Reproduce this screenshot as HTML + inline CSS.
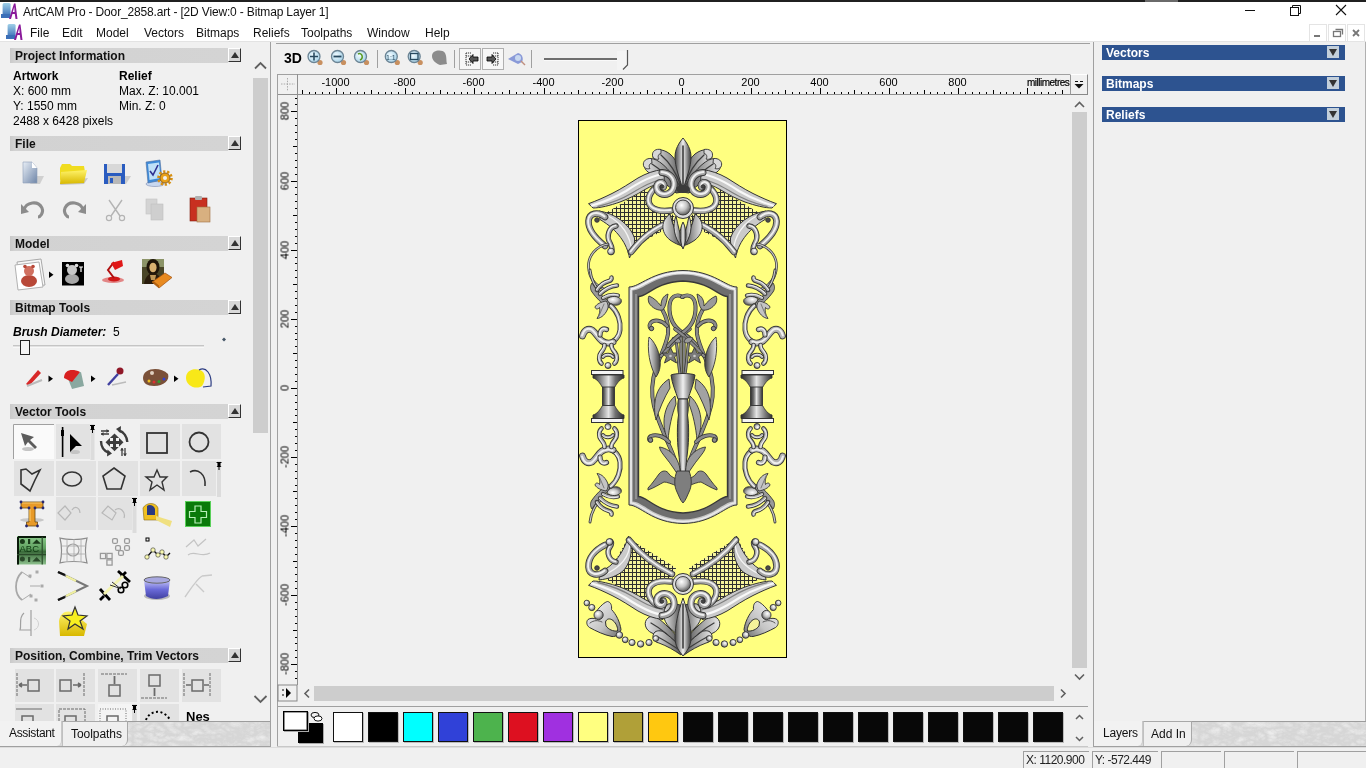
<!DOCTYPE html><html><head><meta charset="utf-8"><style>
*{margin:0;padding:0;box-sizing:border-box}
html,body{width:1366px;height:768px;overflow:hidden;background:#f0f0f0;font-family:"Liberation Sans",sans-serif;color:#000;position:relative}
.a{position:absolute}
.t{position:absolute;white-space:nowrap;line-height:1;will-change:transform}
.hdr{position:absolute;left:10px;width:218px;height:15px;background:linear-gradient(90deg,#c9c9c9 0,#d2d2d2 5px,#d4d4d4 100%)}
.hdrt{position:absolute;left:5px;top:1px;font-weight:bold;font-size:12px;color:#111;will-change:transform}
.cbtn{position:absolute;left:228px;width:13px;height:14px;background:#d8d8d8;border-top:1px solid #fff;border-left:1px solid #fff;border-right:1px solid #333;border-bottom:1px solid #333}
.cbtn:after{content:"";position:absolute;left:2px;top:3px;border-left:4px solid transparent;border-right:4px solid transparent;border-bottom:6px solid #333}
.sw{position:absolute;top:712px;width:30px;height:30px;border:1px solid #111;box-shadow:1px 1px 0 #bbb}
.bar{position:absolute;left:1102px;width:243px;height:15px;background:#2d5390}
.bart{position:absolute;left:4px;top:1px;font-weight:bold;font-size:12px;color:#fff;will-change:transform}
.ddb{position:absolute;left:225px;top:1px;width:12px;height:12px;background:#c3cfda}
.ddb:after{content:"";position:absolute;left:2px;top:3px;border-left:4px solid transparent;border-right:4px solid transparent;border-top:7px solid #333}
</style></head><body>
<div class="a" style="left:0;top:0;width:1366px;height:2px;background:#202020"></div>
<div class="a" style="left:0;top:2px;width:1366px;height:39px;background:#fff"></div>
<div class="a" style="left:0;top:41px;width:1366px;height:1px;background:#e3e3e3"></div>
<div class="t" style="left:23px;top:6px;font-size:12px;color:#111;letter-spacing:-0.16px">ArtCAM Pro - Door_2858.art - [2D View:0 - Bitmap Layer 1]</div>
<div class="t" style="left:30px;top:27px;font-size:12px;color:#111">File</div>
<div class="t" style="left:62px;top:27px;font-size:12px;color:#111">Edit</div>
<div class="t" style="left:96px;top:27px;font-size:12px;color:#111">Model</div>
<div class="t" style="left:144px;top:27px;font-size:12px;color:#111">Vectors</div>
<div class="t" style="left:196px;top:27px;font-size:12px;color:#111">Bitmaps</div>
<div class="t" style="left:253px;top:27px;font-size:12px;color:#111">Reliefs</div>
<div class="t" style="left:301px;top:27px;font-size:12px;color:#111">Toolpaths</div>
<div class="t" style="left:367px;top:27px;font-size:12px;color:#111">Window</div>
<div class="t" style="left:425px;top:27px;font-size:12px;color:#111">Help</div>
<div class="a" style="left:270px;top:42px;width:1px;height:705px;background:#a0a0a0"></div>
<div class="hdr" style="top:48px"><div class="hdrt">Project Information</div></div><div class="cbtn" style="top:48px"></div>
<div class="hdr" style="top:136px"><div class="hdrt">File</div></div><div class="cbtn" style="top:136px"></div>
<div class="hdr" style="top:236px"><div class="hdrt">Model</div></div><div class="cbtn" style="top:236px"></div>
<div class="hdr" style="top:300px"><div class="hdrt">Bitmap Tools</div></div><div class="cbtn" style="top:300px"></div>
<div class="hdr" style="top:404px"><div class="hdrt">Vector Tools</div></div><div class="cbtn" style="top:404px"></div>
<div class="hdr" style="top:648px"><div class="hdrt">Position, Combine, Trim Vectors</div></div><div class="cbtn" style="top:648px"></div>
<div class="t" style="left:13px;top:70px;font-size:12px;font-weight:bold">Artwork</div>
<div class="t" style="left:119px;top:70px;font-size:12px;font-weight:bold">Relief</div>
<div class="t" style="left:13px;top:85px;font-size:12px">X: 600 mm</div>
<div class="t" style="left:13px;top:100px;font-size:12px">Y: 1550 mm</div>
<div class="t" style="left:13px;top:115px;font-size:12px">2488 x 6428 pixels</div>
<div class="t" style="left:119px;top:85px;font-size:12px">Max. Z: 10.001</div>
<div class="t" style="left:119px;top:100px;font-size:12px">Min. Z: 0</div>
<div class="t" style="left:13px;top:326px;font-size:12px;font-weight:bold;font-style:italic">Brush Diameter:</div><div class="t" style="left:113px;top:326px;font-size:12px">5</div>
<div class="a" style="left:253px;top:78px;width:15px;height:355px;background:#cdcdcd"></div>
<div class="a" style="left:276px;top:43px;width:814px;height:1px;background:#a0a0a0"></div>
<div class="t" style="left:284px;top:51px;font-size:14px;font-weight:bold">3D</div>
<div class="a" style="left:277px;top:74px;width:811px;height:1px;background:#a0a0a0"></div>
<div class="a" style="left:277px;top:94px;width:793px;height:1px;background:#909090"></div>
<div class="a" style="left:277px;top:74px;width:1px;height:628px;background:#a0a0a0"></div>
<div class="a" style="left:297px;top:74px;width:1px;height:611px;background:#909090"></div>
<div class="a" style="left:302px;top:90px;width:1px;height:4px;background:#000"></div><div class="a" style="left:309px;top:92px;width:1px;height:2px;background:#000"></div><div class="a" style="left:315px;top:92px;width:1px;height:2px;background:#000"></div><div class="a" style="left:322px;top:92px;width:1px;height:2px;background:#000"></div><div class="a" style="left:329px;top:92px;width:1px;height:2px;background:#000"></div><div class="a" style="left:336px;top:88px;width:1px;height:6px;background:#000"></div><div class="t" style="left:305px;top:77px;width:61px;text-align:center;font-size:11px">-1000</div><div class="a" style="left:343px;top:92px;width:1px;height:2px;background:#000"></div><div class="a" style="left:350px;top:92px;width:1px;height:2px;background:#000"></div><div class="a" style="left:357px;top:92px;width:1px;height:2px;background:#000"></div><div class="a" style="left:364px;top:92px;width:1px;height:2px;background:#000"></div><div class="a" style="left:371px;top:90px;width:1px;height:4px;background:#000"></div><div class="a" style="left:378px;top:92px;width:1px;height:2px;background:#000"></div><div class="a" style="left:385px;top:92px;width:1px;height:2px;background:#000"></div><div class="a" style="left:391px;top:92px;width:1px;height:2px;background:#000"></div><div class="a" style="left:398px;top:92px;width:1px;height:2px;background:#000"></div><div class="a" style="left:405px;top:88px;width:1px;height:6px;background:#000"></div><div class="t" style="left:374px;top:77px;width:61px;text-align:center;font-size:11px">-800</div><div class="a" style="left:412px;top:92px;width:1px;height:2px;background:#000"></div><div class="a" style="left:419px;top:92px;width:1px;height:2px;background:#000"></div><div class="a" style="left:426px;top:92px;width:1px;height:2px;background:#000"></div><div class="a" style="left:433px;top:92px;width:1px;height:2px;background:#000"></div><div class="a" style="left:440px;top:90px;width:1px;height:4px;background:#000"></div><div class="a" style="left:447px;top:92px;width:1px;height:2px;background:#000"></div><div class="a" style="left:454px;top:92px;width:1px;height:2px;background:#000"></div><div class="a" style="left:461px;top:92px;width:1px;height:2px;background:#000"></div><div class="a" style="left:467px;top:92px;width:1px;height:2px;background:#000"></div><div class="a" style="left:474px;top:88px;width:1px;height:6px;background:#000"></div><div class="t" style="left:443px;top:77px;width:61px;text-align:center;font-size:11px">-600</div><div class="a" style="left:481px;top:92px;width:1px;height:2px;background:#000"></div><div class="a" style="left:488px;top:92px;width:1px;height:2px;background:#000"></div><div class="a" style="left:495px;top:92px;width:1px;height:2px;background:#000"></div><div class="a" style="left:502px;top:92px;width:1px;height:2px;background:#000"></div><div class="a" style="left:509px;top:90px;width:1px;height:4px;background:#000"></div><div class="a" style="left:516px;top:92px;width:1px;height:2px;background:#000"></div><div class="a" style="left:523px;top:92px;width:1px;height:2px;background:#000"></div><div class="a" style="left:530px;top:92px;width:1px;height:2px;background:#000"></div><div class="a" style="left:537px;top:92px;width:1px;height:2px;background:#000"></div><div class="a" style="left:544px;top:88px;width:1px;height:6px;background:#000"></div><div class="t" style="left:513px;top:77px;width:61px;text-align:center;font-size:11px">-400</div><div class="a" style="left:550px;top:92px;width:1px;height:2px;background:#000"></div><div class="a" style="left:557px;top:92px;width:1px;height:2px;background:#000"></div><div class="a" style="left:564px;top:92px;width:1px;height:2px;background:#000"></div><div class="a" style="left:571px;top:92px;width:1px;height:2px;background:#000"></div><div class="a" style="left:578px;top:90px;width:1px;height:4px;background:#000"></div><div class="a" style="left:585px;top:92px;width:1px;height:2px;background:#000"></div><div class="a" style="left:592px;top:92px;width:1px;height:2px;background:#000"></div><div class="a" style="left:599px;top:92px;width:1px;height:2px;background:#000"></div><div class="a" style="left:606px;top:92px;width:1px;height:2px;background:#000"></div><div class="a" style="left:613px;top:88px;width:1px;height:6px;background:#000"></div><div class="t" style="left:582px;top:77px;width:61px;text-align:center;font-size:11px">-200</div><div class="a" style="left:620px;top:92px;width:1px;height:2px;background:#000"></div><div class="a" style="left:626px;top:92px;width:1px;height:2px;background:#000"></div><div class="a" style="left:633px;top:92px;width:1px;height:2px;background:#000"></div><div class="a" style="left:640px;top:92px;width:1px;height:2px;background:#000"></div><div class="a" style="left:647px;top:90px;width:1px;height:4px;background:#000"></div><div class="a" style="left:654px;top:92px;width:1px;height:2px;background:#000"></div><div class="a" style="left:661px;top:92px;width:1px;height:2px;background:#000"></div><div class="a" style="left:668px;top:92px;width:1px;height:2px;background:#000"></div><div class="a" style="left:675px;top:92px;width:1px;height:2px;background:#000"></div><div class="a" style="left:682px;top:88px;width:1px;height:6px;background:#000"></div><div class="t" style="left:651px;top:77px;width:61px;text-align:center;font-size:11px">0</div><div class="a" style="left:689px;top:92px;width:1px;height:2px;background:#000"></div><div class="a" style="left:696px;top:92px;width:1px;height:2px;background:#000"></div><div class="a" style="left:702px;top:92px;width:1px;height:2px;background:#000"></div><div class="a" style="left:709px;top:92px;width:1px;height:2px;background:#000"></div><div class="a" style="left:716px;top:90px;width:1px;height:4px;background:#000"></div><div class="a" style="left:723px;top:92px;width:1px;height:2px;background:#000"></div><div class="a" style="left:730px;top:92px;width:1px;height:2px;background:#000"></div><div class="a" style="left:737px;top:92px;width:1px;height:2px;background:#000"></div><div class="a" style="left:744px;top:92px;width:1px;height:2px;background:#000"></div><div class="a" style="left:751px;top:88px;width:1px;height:6px;background:#000"></div><div class="t" style="left:720px;top:77px;width:61px;text-align:center;font-size:11px">200</div><div class="a" style="left:758px;top:92px;width:1px;height:2px;background:#000"></div><div class="a" style="left:765px;top:92px;width:1px;height:2px;background:#000"></div><div class="a" style="left:772px;top:92px;width:1px;height:2px;background:#000"></div><div class="a" style="left:778px;top:92px;width:1px;height:2px;background:#000"></div><div class="a" style="left:785px;top:90px;width:1px;height:4px;background:#000"></div><div class="a" style="left:792px;top:92px;width:1px;height:2px;background:#000"></div><div class="a" style="left:799px;top:92px;width:1px;height:2px;background:#000"></div><div class="a" style="left:806px;top:92px;width:1px;height:2px;background:#000"></div><div class="a" style="left:813px;top:92px;width:1px;height:2px;background:#000"></div><div class="a" style="left:820px;top:88px;width:1px;height:6px;background:#000"></div><div class="t" style="left:789px;top:77px;width:61px;text-align:center;font-size:11px">400</div><div class="a" style="left:827px;top:92px;width:1px;height:2px;background:#000"></div><div class="a" style="left:834px;top:92px;width:1px;height:2px;background:#000"></div><div class="a" style="left:841px;top:92px;width:1px;height:2px;background:#000"></div><div class="a" style="left:848px;top:92px;width:1px;height:2px;background:#000"></div><div class="a" style="left:854px;top:90px;width:1px;height:4px;background:#000"></div><div class="a" style="left:861px;top:92px;width:1px;height:2px;background:#000"></div><div class="a" style="left:868px;top:92px;width:1px;height:2px;background:#000"></div><div class="a" style="left:875px;top:92px;width:1px;height:2px;background:#000"></div><div class="a" style="left:882px;top:92px;width:1px;height:2px;background:#000"></div><div class="a" style="left:889px;top:88px;width:1px;height:6px;background:#000"></div><div class="t" style="left:858px;top:77px;width:61px;text-align:center;font-size:11px">600</div><div class="a" style="left:896px;top:92px;width:1px;height:2px;background:#000"></div><div class="a" style="left:903px;top:92px;width:1px;height:2px;background:#000"></div><div class="a" style="left:910px;top:92px;width:1px;height:2px;background:#000"></div><div class="a" style="left:917px;top:92px;width:1px;height:2px;background:#000"></div><div class="a" style="left:924px;top:90px;width:1px;height:4px;background:#000"></div><div class="a" style="left:930px;top:92px;width:1px;height:2px;background:#000"></div><div class="a" style="left:937px;top:92px;width:1px;height:2px;background:#000"></div><div class="a" style="left:944px;top:92px;width:1px;height:2px;background:#000"></div><div class="a" style="left:951px;top:92px;width:1px;height:2px;background:#000"></div><div class="a" style="left:958px;top:88px;width:1px;height:6px;background:#000"></div><div class="t" style="left:927px;top:77px;width:61px;text-align:center;font-size:11px">800</div><div class="a" style="left:965px;top:92px;width:1px;height:2px;background:#000"></div><div class="a" style="left:972px;top:92px;width:1px;height:2px;background:#000"></div><div class="a" style="left:979px;top:92px;width:1px;height:2px;background:#000"></div><div class="a" style="left:986px;top:92px;width:1px;height:2px;background:#000"></div><div class="a" style="left:993px;top:90px;width:1px;height:4px;background:#000"></div><div class="a" style="left:1000px;top:92px;width:1px;height:2px;background:#000"></div><div class="a" style="left:1006px;top:92px;width:1px;height:2px;background:#000"></div><div class="a" style="left:1013px;top:92px;width:1px;height:2px;background:#000"></div><div class="a" style="left:1020px;top:92px;width:1px;height:2px;background:#000"></div><div class="a" style="left:1027px;top:88px;width:1px;height:6px;background:#000"></div><div class="a" style="left:1034px;top:92px;width:1px;height:2px;background:#000"></div><div class="a" style="left:1041px;top:92px;width:1px;height:2px;background:#000"></div><div class="a" style="left:1048px;top:92px;width:1px;height:2px;background:#000"></div><div class="a" style="left:1055px;top:92px;width:1px;height:2px;background:#000"></div><div class="a" style="left:1062px;top:90px;width:1px;height:4px;background:#000"></div>
<div class="t" style="left:1027px;top:78px;font-size:10px;letter-spacing:-0.5px;color:#000;-webkit-text-stroke:0.2px #000">millimetres</div>
<div class="a" style="left:1070px;top:74px;width:18px;height:21px;background:#f0f0f0;border:1px solid #888;border-top-color:#fff;border-left-color:#999"></div>
<div class="a" style="left:295px;top:98px;width:2px;height:1px;background:#000"></div><div class="a" style="left:295px;top:104px;width:2px;height:1px;background:#000"></div><div class="a" style="left:291px;top:111px;width:6px;height:1px;background:#000"></div><div class="t" style="left:255px;top:105px;width:61px;height:12px;text-align:center;font-size:11px;transform:rotate(-90deg)">800</div><div class="a" style="left:295px;top:118px;width:2px;height:1px;background:#000"></div><div class="a" style="left:295px;top:125px;width:2px;height:1px;background:#000"></div><div class="a" style="left:295px;top:132px;width:2px;height:1px;background:#000"></div><div class="a" style="left:295px;top:139px;width:2px;height:1px;background:#000"></div><div class="a" style="left:293px;top:146px;width:4px;height:1px;background:#000"></div><div class="a" style="left:295px;top:153px;width:2px;height:1px;background:#000"></div><div class="a" style="left:295px;top:160px;width:2px;height:1px;background:#000"></div><div class="a" style="left:295px;top:167px;width:2px;height:1px;background:#000"></div><div class="a" style="left:295px;top:174px;width:2px;height:1px;background:#000"></div><div class="a" style="left:291px;top:181px;width:6px;height:1px;background:#000"></div><div class="t" style="left:255px;top:175px;width:61px;height:12px;text-align:center;font-size:11px;transform:rotate(-90deg)">600</div><div class="a" style="left:295px;top:187px;width:2px;height:1px;background:#000"></div><div class="a" style="left:295px;top:194px;width:2px;height:1px;background:#000"></div><div class="a" style="left:295px;top:201px;width:2px;height:1px;background:#000"></div><div class="a" style="left:295px;top:208px;width:2px;height:1px;background:#000"></div><div class="a" style="left:293px;top:215px;width:4px;height:1px;background:#000"></div><div class="a" style="left:295px;top:222px;width:2px;height:1px;background:#000"></div><div class="a" style="left:295px;top:229px;width:2px;height:1px;background:#000"></div><div class="a" style="left:295px;top:236px;width:2px;height:1px;background:#000"></div><div class="a" style="left:295px;top:243px;width:2px;height:1px;background:#000"></div><div class="a" style="left:291px;top:250px;width:6px;height:1px;background:#000"></div><div class="t" style="left:255px;top:244px;width:61px;height:12px;text-align:center;font-size:11px;transform:rotate(-90deg)">400</div><div class="a" style="left:295px;top:257px;width:2px;height:1px;background:#000"></div><div class="a" style="left:295px;top:263px;width:2px;height:1px;background:#000"></div><div class="a" style="left:295px;top:270px;width:2px;height:1px;background:#000"></div><div class="a" style="left:295px;top:277px;width:2px;height:1px;background:#000"></div><div class="a" style="left:293px;top:284px;width:4px;height:1px;background:#000"></div><div class="a" style="left:295px;top:291px;width:2px;height:1px;background:#000"></div><div class="a" style="left:295px;top:298px;width:2px;height:1px;background:#000"></div><div class="a" style="left:295px;top:305px;width:2px;height:1px;background:#000"></div><div class="a" style="left:295px;top:312px;width:2px;height:1px;background:#000"></div><div class="a" style="left:291px;top:319px;width:6px;height:1px;background:#000"></div><div class="t" style="left:255px;top:313px;width:61px;height:12px;text-align:center;font-size:11px;transform:rotate(-90deg)">200</div><div class="a" style="left:295px;top:326px;width:2px;height:1px;background:#000"></div><div class="a" style="left:295px;top:333px;width:2px;height:1px;background:#000"></div><div class="a" style="left:295px;top:339px;width:2px;height:1px;background:#000"></div><div class="a" style="left:295px;top:346px;width:2px;height:1px;background:#000"></div><div class="a" style="left:293px;top:353px;width:4px;height:1px;background:#000"></div><div class="a" style="left:295px;top:360px;width:2px;height:1px;background:#000"></div><div class="a" style="left:295px;top:367px;width:2px;height:1px;background:#000"></div><div class="a" style="left:295px;top:374px;width:2px;height:1px;background:#000"></div><div class="a" style="left:295px;top:381px;width:2px;height:1px;background:#000"></div><div class="a" style="left:291px;top:388px;width:6px;height:1px;background:#000"></div><div class="t" style="left:255px;top:382px;width:61px;height:12px;text-align:center;font-size:11px;transform:rotate(-90deg)">0</div><div class="a" style="left:295px;top:395px;width:2px;height:1px;background:#000"></div><div class="a" style="left:295px;top:402px;width:2px;height:1px;background:#000"></div><div class="a" style="left:295px;top:409px;width:2px;height:1px;background:#000"></div><div class="a" style="left:295px;top:415px;width:2px;height:1px;background:#000"></div><div class="a" style="left:293px;top:422px;width:4px;height:1px;background:#000"></div><div class="a" style="left:295px;top:429px;width:2px;height:1px;background:#000"></div><div class="a" style="left:295px;top:436px;width:2px;height:1px;background:#000"></div><div class="a" style="left:295px;top:443px;width:2px;height:1px;background:#000"></div><div class="a" style="left:295px;top:450px;width:2px;height:1px;background:#000"></div><div class="a" style="left:291px;top:457px;width:6px;height:1px;background:#000"></div><div class="t" style="left:255px;top:451px;width:61px;height:12px;text-align:center;font-size:11px;transform:rotate(-90deg)">-200</div><div class="a" style="left:295px;top:464px;width:2px;height:1px;background:#000"></div><div class="a" style="left:295px;top:471px;width:2px;height:1px;background:#000"></div><div class="a" style="left:295px;top:478px;width:2px;height:1px;background:#000"></div><div class="a" style="left:295px;top:485px;width:2px;height:1px;background:#000"></div><div class="a" style="left:293px;top:491px;width:4px;height:1px;background:#000"></div><div class="a" style="left:295px;top:498px;width:2px;height:1px;background:#000"></div><div class="a" style="left:295px;top:505px;width:2px;height:1px;background:#000"></div><div class="a" style="left:295px;top:512px;width:2px;height:1px;background:#000"></div><div class="a" style="left:295px;top:519px;width:2px;height:1px;background:#000"></div><div class="a" style="left:291px;top:526px;width:6px;height:1px;background:#000"></div><div class="t" style="left:255px;top:520px;width:61px;height:12px;text-align:center;font-size:11px;transform:rotate(-90deg)">-400</div><div class="a" style="left:295px;top:533px;width:2px;height:1px;background:#000"></div><div class="a" style="left:295px;top:540px;width:2px;height:1px;background:#000"></div><div class="a" style="left:295px;top:547px;width:2px;height:1px;background:#000"></div><div class="a" style="left:295px;top:554px;width:2px;height:1px;background:#000"></div><div class="a" style="left:293px;top:561px;width:4px;height:1px;background:#000"></div><div class="a" style="left:295px;top:567px;width:2px;height:1px;background:#000"></div><div class="a" style="left:295px;top:574px;width:2px;height:1px;background:#000"></div><div class="a" style="left:295px;top:581px;width:2px;height:1px;background:#000"></div><div class="a" style="left:295px;top:588px;width:2px;height:1px;background:#000"></div><div class="a" style="left:291px;top:595px;width:6px;height:1px;background:#000"></div><div class="t" style="left:255px;top:589px;width:61px;height:12px;text-align:center;font-size:11px;transform:rotate(-90deg)">-600</div><div class="a" style="left:295px;top:602px;width:2px;height:1px;background:#000"></div><div class="a" style="left:295px;top:609px;width:2px;height:1px;background:#000"></div><div class="a" style="left:295px;top:616px;width:2px;height:1px;background:#000"></div><div class="a" style="left:295px;top:623px;width:2px;height:1px;background:#000"></div><div class="a" style="left:293px;top:630px;width:4px;height:1px;background:#000"></div><div class="a" style="left:295px;top:637px;width:2px;height:1px;background:#000"></div><div class="a" style="left:295px;top:643px;width:2px;height:1px;background:#000"></div><div class="a" style="left:295px;top:650px;width:2px;height:1px;background:#000"></div><div class="a" style="left:295px;top:657px;width:2px;height:1px;background:#000"></div><div class="a" style="left:291px;top:664px;width:6px;height:1px;background:#000"></div><div class="t" style="left:255px;top:658px;width:61px;height:12px;text-align:center;font-size:11px;transform:rotate(-90deg)">-800</div><div class="a" style="left:295px;top:671px;width:2px;height:1px;background:#000"></div><div class="a" style="left:295px;top:678px;width:2px;height:1px;background:#000"></div>
<div class="a" style="left:1072px;top:112px;width:15px;height:556px;background:#cdcdcd"></div>
<div class="a" style="left:314px;top:686px;width:740px;height:15px;background:#cdcdcd"></div>
<div class="a" style="left:578px;top:120px;width:209px;height:538px;background:#ffff80;border:1px solid #000"></div>
<svg class="a" style="left:0;top:0" width="1366" height="768" viewBox="0 0 1366 768"><defs><radialGradient id="gB" cx="0.4" cy="0.35" r="0.7"><stop offset="0" stop-color="#ffffff"/><stop offset="0.5" stop-color="#c4c4c4"/><stop offset="1" stop-color="#505050"/></radialGradient><linearGradient id="gL" x1="0" y1="0" x2="1" y2="1"><stop offset="0" stop-color="#f6f6f6"/><stop offset="0.6" stop-color="#c4c4c4"/><stop offset="1" stop-color="#6a6a6a"/></linearGradient><linearGradient id="gLf" x1="0" y1="0" x2="1" y2="0"><stop offset="0" stop-color="#e8e8e8"/><stop offset="0.5" stop-color="#9a9a9a"/><stop offset="1" stop-color="#3c3c3c"/></linearGradient><linearGradient id="gLd" x1="0" y1="0" x2="0" y2="1"><stop offset="0" stop-color="#9a9a9a"/><stop offset="0.35" stop-color="#e6e6e6"/><stop offset="0.7" stop-color="#c0c0c0"/><stop offset="1" stop-color="#5a5a5a"/></linearGradient><linearGradient id="gCol" x1="0" y1="0" x2="1" y2="0"><stop offset="0" stop-color="#484848"/><stop offset="0.28" stop-color="#a0a0a0"/><stop offset="0.5" stop-color="#f0f0f0"/><stop offset="0.75" stop-color="#909090"/><stop offset="1" stop-color="#3a3a3a"/></linearGradient><pattern id="lat" x="0" y="0" width="4" height="4" patternUnits="userSpaceOnUse"><rect width="4" height="4" fill="#f6f49c"/><rect x="0" y="0" width="4" height="1" fill="#2e2e2e"/><rect x="0" y="0" width="1" height="4" fill="#2e2e2e"/></pattern><linearGradient id="gCol2" x1="0" y1="0" x2="1" y2="0"><stop offset="0" stop-color="#2e2e2e"/><stop offset="0.22" stop-color="#7c7c7c"/><stop offset="0.5" stop-color="#e4e4e4"/><stop offset="0.72" stop-color="#727272"/><stop offset="1" stop-color="#2a2a2a"/></linearGradient></defs><path d="M629,287 C640,287 652,271 683,270.5 C714,271 726,287 737,287 L737,505 C726,505 714,523 683,523.5 C652,523 640,505 629,505 Z" fill="#c8c8c8" stroke="#333" stroke-width="1"/><path d="M632.5,290.5 C643,290.5 654,275 683,274.5 C712,275 723,290.5 733.5,290.5 L733.5,501.5 C723,501.5 712,519 683,519.5 C654,519 643,501.5 632.5,501.5 Z" fill="#6e6e6e"/><path d="M638.5,296.5 C647,296.5 656,282 683,281 C710,282 719,296.5 727.5,296.5 L727.5,496.5 C719,496.5 710,512 683,513 C656,512 647,496.5 638.5,496.5 Z" fill="#ffff80" stroke="#383838" stroke-width="1.4"/><path d="M631,289 C641,289 653,273 683,272.5 C713,273 725,289 735,289" fill="none" stroke="#f4f4f4" stroke-width="1.8"/><path d="M631,290 L631,503 C641,503 653,521 683,521.5 C713,521 725,503 735,503 L735,290" fill="none" stroke="#eaeaea" stroke-width="1.6"/><path d="M636,294 L636,499" stroke="#a8a8a8" stroke-width="1.2"/><path d="M730,294 L730,499" stroke="#a8a8a8" stroke-width="1.2"/><g id="lh"><path d="M604,214 L646,189 L650,196 L648,203 L652,208 L662,212 L674,215 L676,224 L634,246 Z" fill="url(#lat)"/><path d="M599,211 C614,213 630,224 634.5,238 C635,246 632,252 629.5,258 C627,244 618,230 600,219.5 Z" fill="#cacaca" stroke="#333" stroke-width="1.0" stroke-linejoin="round"/><path d="M603,214 C616,218 628,230 631,246" fill="none" stroke="#f4f4f4" stroke-width="1.3" stroke-linecap="round"/><path d="M631,252 C640,240 654,228 670,222" fill="none" stroke="#383838" stroke-width="6.40" stroke-linecap="round" stroke-linejoin="round"/><path d="M631,252 C640,240 654,228 670,222" fill="none" stroke="#a4a4a4" stroke-width="4.60" stroke-linecap="round" stroke-linejoin="round"/><path d="M631,252 C640,240 654,228 670,222" fill="none" stroke="#efefef" stroke-width="1.84" stroke-linecap="round" stroke-linejoin="round" transform="translate(-0.4,-0.5)"/><path d="M657,187 C649,192 646,201 651,206.5 C655,210.5 663,211.5 671,210.5" fill="none" stroke="#383838" stroke-width="6.40" stroke-linecap="round" stroke-linejoin="round"/><path d="M657,187 C649,192 646,201 651,206.5 C655,210.5 663,211.5 671,210.5" fill="none" stroke="#a4a4a4" stroke-width="4.60" stroke-linecap="round" stroke-linejoin="round"/><path d="M657,187 C649,192 646,201 651,206.5 C655,210.5 663,211.5 671,210.5" fill="none" stroke="#efefef" stroke-width="1.84" stroke-linecap="round" stroke-linejoin="round" transform="translate(-0.4,-0.5)"/><path d="M659,150 C652,151 651,158 656,162 C664,169 671,178 679,191 L686,189 C683,174 678,161 670,154 C666,151 662,149.5 659,150 Z" fill="url(#gLf)" stroke="#333" stroke-width="1.0" stroke-linejoin="round"/><path d="M661,155 C668,161 676,172 681,186" fill="none" stroke="#3c3c3c" stroke-width="1.3" stroke-linecap="round"/><path d="M649,159 C642,161 643,168 648,172 C657,178 667,184 676,193 L683,192 C677,180 669,169 661,163 C657,160 653,158 649,159 Z" fill="url(#gLf)" stroke="#333" stroke-width="1.0" stroke-linejoin="round"/><path d="M652,164 C660,169 670,178 678,189" fill="none" stroke="#3c3c3c" stroke-width="1.3" stroke-linecap="round"/><path d="M661,149.5 C656,148.5 652,151 652.5,155.5 C653,158.5 656,160 659,159 C657.5,157 658,154 661,153.5 Z" fill="#d8d8d8" stroke="#333" stroke-width="0.9" stroke-linejoin="round"/><path d="M651.5,158.5 C646.5,158 642.5,161 643.5,165.5 C644.5,168.5 647.5,169.5 650,168.5 C648.5,166.5 649,163.5 652,163 Z" fill="#d8d8d8" stroke="#333" stroke-width="0.9" stroke-linejoin="round"/><path d="M588.5,203.7 C596,201 604,197.5 612,193.5 C622,188.5 630,183 638,178 C646,173.5 654,170.5 663,169.5 L665,182.5 C657,183.5 651,186 645,189.5 C636,195 628,199 620,202 C610,205.5 600,208 593,208 Z" fill="#cbcbcb" stroke="#333" stroke-width="1.0" stroke-linejoin="round"/><path d="M592,205.5 C604,202 616,197 626,191 C638,183 650,176 663,174" fill="none" stroke="#f8f8f8" stroke-width="2.2" stroke-linecap="round"/><path d="M598,206.5 C610,203.5 622,199 632,193 C642,187 652,181 664,179" fill="none" stroke="#808080" stroke-width="1.3" stroke-linecap="round"/><path d="M662,172.5 C670,173 675,179 674,186 C673,193 666,196 660.5,193.5 C656,191 655.5,185 659,183 C662,181.5 665,184 663.5,187" fill="none" stroke="#383838" stroke-width="7.00" stroke-linecap="round" stroke-linejoin="round"/><path d="M662,172.5 C670,173 675,179 674,186 C673,193 666,196 660.5,193.5 C656,191 655.5,185 659,183 C662,181.5 665,184 663.5,187" fill="none" stroke="#a4a4a4" stroke-width="5.20" stroke-linecap="round" stroke-linejoin="round"/><path d="M662,172.5 C670,173 675,179 674,186 C673,193 666,196 660.5,193.5 C656,191 655.5,185 659,183 C662,181.5 665,184 663.5,187" fill="none" stroke="#efefef" stroke-width="2.08" stroke-linecap="round" stroke-linejoin="round" transform="translate(-0.4,-0.5)"/><circle cx="662" cy="186.5" r="1.8" fill="#444" stroke="#333" stroke-width="0.9"/><path d="M605,217 C598,211 589,213 588.5,221 C588,230 595,238 605,246" fill="none" stroke="#383838" stroke-width="6.60" stroke-linecap="round" stroke-linejoin="round"/><path d="M605,217 C598,211 589,213 588.5,221 C588,230 595,238 605,246" fill="none" stroke="#a4a4a4" stroke-width="4.80" stroke-linecap="round" stroke-linejoin="round"/><path d="M605,217 C598,211 589,213 588.5,221 C588,230 595,238 605,246" fill="none" stroke="#efefef" stroke-width="1.92" stroke-linecap="round" stroke-linejoin="round" transform="translate(-0.4,-0.5)"/><circle cx="597" cy="220" r="2.3" fill="#4a4a4a" stroke="#333" stroke-width="0.9"/><path d="M616,226 C609,227 606,236 610,243 C612,247 613,250 611,252" fill="none" stroke="#383838" stroke-width="5.40" stroke-linecap="round" stroke-linejoin="round"/><path d="M616,226 C609,227 606,236 610,243 C612,247 613,250 611,252" fill="none" stroke="#a4a4a4" stroke-width="3.60" stroke-linecap="round" stroke-linejoin="round"/><path d="M616,226 C609,227 606,236 610,243 C612,247 613,250 611,252" fill="none" stroke="#efefef" stroke-width="1.44" stroke-linecap="round" stroke-linejoin="round" transform="translate(-0.4,-0.5)"/><circle cx="611" cy="251.5" r="3.4" fill="url(#gB)" stroke="#333" stroke-width="0.9"/><path d="M608,244 C596,246 588,256 588.5,267 C589,278 596,286 606,290" fill="none" stroke="#3a3a3a" stroke-width="2.6" stroke-linecap="round"/><path d="M608,244 C596,246 588,256 588.5,267 C589,278 596,286 606,290" fill="none" stroke="#c8c8c8" stroke-width="1.09" stroke-linecap="round"/><path d="M670,214 C661,220 660,232 670,240 C674,243 679,245 682,246 C677,236 673,226 670,214 Z" fill="url(#gLf)" stroke="#333" stroke-width="1.0" stroke-linejoin="round"/><path d="M676,216 C672,226 674,238 682,247 L683,242 C680,234 678,226 676,216 Z" fill="url(#gLf)" stroke="#333" stroke-width="1.0" stroke-linejoin="round"/><g id="su"><path d="M590,270 C591,279 595,287 601,293" fill="none" stroke="#3a3a3a" stroke-width="2.8" stroke-linecap="round"/><path d="M590,270 C591,279 595,287 601,293" fill="none" stroke="#c8c8c8" stroke-width="1.18" stroke-linecap="round"/><path d="M592,283 C596,290 602,296 608,301 L611,306 L607,308 C602,303 596,298 592,292 C590,289 590,286 592,283 Z" fill="#9a9a9a" stroke="#333" stroke-width="0.9" stroke-linejoin="round"/><path d="M597,290 C600,285 605,282 609,281 C611,280.5 612,279 611.5,277.5" fill="none" stroke="#383838" stroke-width="4.40" stroke-linecap="round" stroke-linejoin="round"/><path d="M597,290 C600,285 605,282 609,281 C611,280.5 612,279 611.5,277.5" fill="none" stroke="#a4a4a4" stroke-width="2.60" stroke-linecap="round" stroke-linejoin="round"/><path d="M597,290 C600,285 605,282 609,281 C611,280.5 612,279 611.5,277.5" fill="none" stroke="#efefef" stroke-width="1.04" stroke-linecap="round" stroke-linejoin="round" transform="translate(-0.4,-0.5)"/><path d="M600,294 C605,289 611,286 617,285.5" fill="none" stroke="#383838" stroke-width="4.40" stroke-linecap="round" stroke-linejoin="round"/><path d="M600,294 C605,289 611,286 617,285.5" fill="none" stroke="#a8a8a8" stroke-width="2.60" stroke-linecap="round" stroke-linejoin="round"/><path d="M600,294 C605,289 611,286 617,285.5" fill="none" stroke="#efefef" stroke-width="1.04" stroke-linecap="round" stroke-linejoin="round" transform="translate(-0.4,-0.5)"/><path d="M603,298 C608,295 613,294 618,295.5" fill="none" stroke="#383838" stroke-width="4.20" stroke-linecap="round" stroke-linejoin="round"/><path d="M603,298 C608,295 613,294 618,295.5" fill="none" stroke="#b0b0b0" stroke-width="2.40" stroke-linecap="round" stroke-linejoin="round"/><path d="M603,298 C608,295 613,294 618,295.5" fill="none" stroke="#efefef" stroke-width="0.96" stroke-linecap="round" stroke-linejoin="round" transform="translate(-0.4,-0.5)"/><path d="M607,299 C611,295.5 618,295.5 621,299.5 C622.5,303.5 618.5,306 613.5,305 C609.5,304 607.5,301.5 607,299 Z" fill="url(#gB)" stroke="#333" stroke-width="0.9" stroke-linejoin="round"/><path d="M606,301 C601,302 596.5,304 595,307 C595.5,309.5 598,309.5 599.5,307.5 C600.5,310.5 599.5,315 597,318.5 C602,318 606,313.5 608,308 C608.5,305 607.5,302.5 606,301 Z" fill="#c4c4c4" stroke="#333" stroke-width="0.9" stroke-linejoin="round"/><path d="M604,304 C602,308 601,312 599,316" fill="none" stroke="#707070" stroke-width="0.9" stroke-linecap="round"/><path d="M611,306 C618,312 621,322 620,330 C619,338 614,342 607,343.5" fill="none" stroke="#383838" stroke-width="5.00" stroke-linecap="round" stroke-linejoin="round"/><path d="M611,306 C618,312 621,322 620,330 C619,338 614,342 607,343.5" fill="none" stroke="#a8a8a8" stroke-width="3.20" stroke-linecap="round" stroke-linejoin="round"/><path d="M611,306 C618,312 621,322 620,330 C619,338 614,342 607,343.5" fill="none" stroke="#efefef" stroke-width="1.28" stroke-linecap="round" stroke-linejoin="round" transform="translate(-0.4,-0.5)"/><path d="M582.5,336 C584,330 588,328 592,330 C596,333 598,338 602,341 C606,343.5 610,343.5 613,342" fill="none" stroke="#383838" stroke-width="6.80" stroke-linecap="round" stroke-linejoin="round"/><path d="M582.5,336 C584,330 588,328 592,330 C596,333 598,338 602,341 C606,343.5 610,343.5 613,342" fill="none" stroke="#b4b4b4" stroke-width="5.00" stroke-linecap="round" stroke-linejoin="round"/><path d="M582.5,336 C584,330 588,328 592,330 C596,333 598,338 602,341 C606,343.5 610,343.5 613,342" fill="none" stroke="#efefef" stroke-width="2.00" stroke-linecap="round" stroke-linejoin="round" transform="translate(-0.4,-0.5)"/><path d="M600,335 C600,330 603,328 606.5,329.5" fill="none" stroke="#383838" stroke-width="5.20" stroke-linecap="round" stroke-linejoin="round"/><path d="M600,335 C600,330 603,328 606.5,329.5" fill="none" stroke="#b4b4b4" stroke-width="3.40" stroke-linecap="round" stroke-linejoin="round"/><path d="M600,335 C600,330 603,328 606.5,329.5" fill="none" stroke="#efefef" stroke-width="1.36" stroke-linecap="round" stroke-linejoin="round" transform="translate(-0.4,-0.5)"/><path d="M604.5,345 C605,348 603,350 601,352.5 C598.5,355.5 598.5,361 601.5,363.5 M611.5,345 C611,348 613,350 615,352.5 C617.5,355.5 617.5,361 614.5,363.5" fill="none" stroke="#383838" stroke-width="4.60" stroke-linecap="round" stroke-linejoin="round"/><path d="M604.5,345 C605,348 603,350 601,352.5 C598.5,355.5 598.5,361 601.5,363.5 M611.5,345 C611,348 613,350 615,352.5 C617.5,355.5 617.5,361 614.5,363.5" fill="none" stroke="#b0b0b0" stroke-width="2.80" stroke-linecap="round" stroke-linejoin="round"/><path d="M604.5,345 C605,348 603,350 601,352.5 C598.5,355.5 598.5,361 601.5,363.5 M611.5,345 C611,348 613,350 615,352.5 C617.5,355.5 617.5,361 614.5,363.5" fill="none" stroke="#efefef" stroke-width="1.12" stroke-linecap="round" stroke-linejoin="round" transform="translate(-0.4,-0.5)"/><path d="M603,357 C605,354 611,354 613,357" fill="none" stroke="#383838" stroke-width="4.00" stroke-linecap="round" stroke-linejoin="round"/><path d="M603,357 C605,354 611,354 613,357" fill="none" stroke="#b0b0b0" stroke-width="2.20" stroke-linecap="round" stroke-linejoin="round"/><path d="M603,357 C605,354 611,354 613,357" fill="none" stroke="#efefef" stroke-width="0.88" stroke-linecap="round" stroke-linejoin="round" transform="translate(-0.4,-0.5)"/><circle cx="608" cy="365.5" r="3" fill="url(#gB)" stroke="#333" stroke-width="0.9"/></g><use href="#su" transform="translate(0,792) scale(1,-1)"/><rect x="591.5" y="370.5" width="31.5" height="4" fill="#f4f4f4" stroke="#333" stroke-width="1"/><path d="M593,375 L624,375 L624,378 C620,379 617,383 614.5,387.5 L602.5,387.5 C600,383 597,379 593,378 Z" fill="url(#gCol2)" stroke="#333" stroke-width="0.9" stroke-linejoin="round"/><rect x="602.5" y="387" width="12" height="19" fill="url(#gCol2)" stroke="#333" stroke-width="0.9"/><path d="M602.5,405.5 L614.5,405.5 C617,410 620,414 624,415 L624,418.5 L593,418.5 L593,415 C597,414 600,410 602.5,405.5 Z" fill="url(#gCol2)" stroke="#333" stroke-width="0.9" stroke-linejoin="round"/><rect x="591.5" y="418.5" width="31.5" height="4" fill="#f4f4f4" stroke="#333" stroke-width="1"/><path d="M604,578 L646,603 L650,596 L648,589 L652,584 L662,580 L674,577 L676,568 L628,538 L608,574 Z" fill="url(#lat)"/><path d="M628.5,536 C633,548 632,560 624,570 C618,576 608,579 599,580 L600,572 C614,566 624,552 628.5,536 Z" fill="#cacaca" stroke="#333" stroke-width="1.0" stroke-linejoin="round"/><path d="M630,542 C630,554 624,566 604,575" fill="none" stroke="#f4f4f4" stroke-width="1.3" stroke-linecap="round"/><path d="M629,540 C640,554 656,566 672,574" fill="none" stroke="#383838" stroke-width="6.40" stroke-linecap="round" stroke-linejoin="round"/><path d="M629,540 C640,554 656,566 672,574" fill="none" stroke="#a4a4a4" stroke-width="4.60" stroke-linecap="round" stroke-linejoin="round"/><path d="M629,540 C640,554 656,566 672,574" fill="none" stroke="#efefef" stroke-width="1.84" stroke-linecap="round" stroke-linejoin="round" transform="translate(-0.4,-0.5)"/><path d="M648,618 C643,622 645,630 652,633 C661,637 671,643 680,652 L685,647 C677,636 668,626 659,619 C655,616 651,615.5 648,618 Z" fill="url(#gLf)" stroke="#333" stroke-width="1.0" stroke-linejoin="round"/><path d="M651,623 C660,628 670,636 680,647" fill="none" stroke="#3c3c3c" stroke-width="1.3" stroke-linecap="round"/><path d="M655,632 C651,636 653,642 659,643 C667,646 674,650 681,655 L685,651 C679,645 672,638 665,633 C662,630.5 658,630 655,632 Z" fill="url(#gLf)" stroke="#333" stroke-width="1.0" stroke-linejoin="round"/><path d="M658,637 C666,641 673,646 681,651" fill="none" stroke="#3c3c3c" stroke-width="1.1" stroke-linecap="round"/><path d="M668,604 C662,610 662,620 670,628 C674,632 679,636 683,640 L683,606 C678,604 672,603 668,604 Z" fill="url(#gLf)" stroke="#333" stroke-width="1.0" stroke-linejoin="round"/><path d="M588.5,585.3 C596,588 604,591.5 612,595.5 C622,600.5 630,606 638,611 C646,615.5 654,618.5 663,619.5 L665,606.5 C657,605.5 651,603 645,599.5 C636,594 628,590 620,587 C610,583.5 600,581 593,581 Z" fill="#cbcbcb" stroke="#333" stroke-width="1.0" stroke-linejoin="round"/><path d="M592,583.5 C604,587 616,592 626,598 C638,606 650,613 663,615" fill="none" stroke="#f8f8f8" stroke-width="2.2" stroke-linecap="round"/><path d="M598,582.5 C610,585.5 622,590 632,596 C642,602 652,608 664,610" fill="none" stroke="#808080" stroke-width="1.3" stroke-linecap="round"/><path d="M657,605 C649,600 646,591 651,585.5 C655,581.5 663,580.5 671,581.5" fill="none" stroke="#383838" stroke-width="6.40" stroke-linecap="round" stroke-linejoin="round"/><path d="M657,605 C649,600 646,591 651,585.5 C655,581.5 663,580.5 671,581.5" fill="none" stroke="#a4a4a4" stroke-width="4.60" stroke-linecap="round" stroke-linejoin="round"/><path d="M657,605 C649,600 646,591 651,585.5 C655,581.5 663,580.5 671,581.5" fill="none" stroke="#efefef" stroke-width="1.84" stroke-linecap="round" stroke-linejoin="round" transform="translate(-0.4,-0.5)"/><path d="M662,615.5 C670,615 675,609 674,602 C673,595 666,592 660.5,594.5 C656,597 655.5,603 659,605 C662,606.5 665,604 663.5,601" fill="none" stroke="#383838" stroke-width="7.00" stroke-linecap="round" stroke-linejoin="round"/><path d="M662,615.5 C670,615 675,609 674,602 C673,595 666,592 660.5,594.5 C656,597 655.5,603 659,605 C662,606.5 665,604 663.5,601" fill="none" stroke="#a4a4a4" stroke-width="5.20" stroke-linecap="round" stroke-linejoin="round"/><path d="M662,615.5 C670,615 675,609 674,602 C673,595 666,592 660.5,594.5 C656,597 655.5,603 659,605 C662,606.5 665,604 663.5,601" fill="none" stroke="#efefef" stroke-width="2.08" stroke-linecap="round" stroke-linejoin="round" transform="translate(-0.4,-0.5)"/><circle cx="662" cy="601.5" r="1.8" fill="#444" stroke="#333" stroke-width="0.9"/><path d="M605,571 C598,577 589,575 588.5,567 C588,558 595,550 605,545" fill="none" stroke="#383838" stroke-width="6.60" stroke-linecap="round" stroke-linejoin="round"/><path d="M605,571 C598,577 589,575 588.5,567 C588,558 595,550 605,545" fill="none" stroke="#a4a4a4" stroke-width="4.80" stroke-linecap="round" stroke-linejoin="round"/><path d="M605,571 C598,577 589,575 588.5,567 C588,558 595,550 605,545" fill="none" stroke="#efefef" stroke-width="1.92" stroke-linecap="round" stroke-linejoin="round" transform="translate(-0.4,-0.5)"/><circle cx="597" cy="568" r="2.3" fill="#4a4a4a" stroke="#333" stroke-width="0.9"/><path d="M616,562 C609,561 606,552 610,547 C612,544 612,542 610,541" fill="none" stroke="#383838" stroke-width="5.40" stroke-linecap="round" stroke-linejoin="round"/><path d="M616,562 C609,561 606,552 610,547 C612,544 612,542 610,541" fill="none" stroke="#a4a4a4" stroke-width="3.60" stroke-linecap="round" stroke-linejoin="round"/><path d="M616,562 C609,561 606,552 610,547 C612,544 612,542 610,541" fill="none" stroke="#efefef" stroke-width="1.44" stroke-linecap="round" stroke-linejoin="round" transform="translate(-0.4,-0.5)"/><circle cx="609.5" cy="542" r="3.4" fill="url(#gB)" stroke="#333" stroke-width="0.9"/><path d="M596,612 C600,606 605,602 607.5,601.5 C611,602 612,606 611.5,609.5 C616,614 620,622 621,629.5 C620,634 616,637 612,636.5 C604,635 596,631 589.5,627.5 C586.5,625.5 586,621.5 588,619.5 C590,618 594,618 596,619 Z" fill="url(#gL)" stroke="#333" stroke-width="1.0" stroke-linejoin="round"/><path d="M605.5,622 C606.5,618.5 610,618 613,620.5 C616.5,623.5 618,628 617.5,631 C613,631.5 608.5,629.5 606,626 Z" fill="#f4f29a" stroke="#2e2e2e" stroke-width="1"/><path d="M590,623 C594,620 598,620 602,622" fill="none" stroke="#555" stroke-width="1" stroke-linecap="round"/><circle cx="598.6" cy="615" r="4.6" fill="url(#gB)" stroke="#333" stroke-width="0.9"/><circle cx="586.8" cy="603" r="2.8" fill="url(#gB)" stroke="#333" stroke-width="0.9"/><circle cx="591.8" cy="607.5" r="3.1" fill="url(#gB)" stroke="#333" stroke-width="0.9"/><circle cx="619.4" cy="635" r="3.3" fill="url(#gB)" stroke="#333" stroke-width="0.9"/><circle cx="625.2" cy="639.8" r="2.9" fill="url(#gB)" stroke="#333" stroke-width="0.9"/><circle cx="632" cy="642.5" r="3.1" fill="url(#gB)" stroke="#333" stroke-width="0.9"/><circle cx="640.6" cy="644" r="3.2" fill="url(#gB)" stroke="#333" stroke-width="0.9"/><circle cx="649" cy="642.5" r="3.1" fill="url(#gB)" stroke="#333" stroke-width="0.9"/><circle cx="655.8" cy="638.5" r="2.9" fill="url(#gB)" stroke="#333" stroke-width="0.9"/><path d="M683,297 C676,293 670,297 669.5,306 C669,316 672,326 683,333 C690,338 694,342 697,346" fill="none" stroke="#333" stroke-width="4.0" stroke-linecap="round"/><path d="M683,297 C676,293 670,297 669.5,306 C669,316 672,326 683,333 C690,338 694,342 697,346" fill="none" stroke="#8a8a8a" stroke-width="2.6" stroke-linecap="round"/><path d="M662,309 C666,316 669,324 668,334 C666,346 660,356 656,368 C652,380 651,394 654,406 C658,422 666,438 672,452 C676,462 678,470 680,476" fill="none" stroke="#333" stroke-width="4.0" stroke-linecap="round"/><path d="M662,309 C666,316 669,324 668,334 C666,346 660,356 656,368 C652,380 651,394 654,406 C658,422 666,438 672,452 C676,462 678,470 680,476" fill="none" stroke="#8a8a8a" stroke-width="2.6" stroke-linecap="round"/><path d="M667,326 C662,320 654,319 650.5,323 C648.5,326 650,329 652,328.5" fill="none" stroke="#333" stroke-width="4.0" stroke-linecap="round"/><path d="M667,326 C662,320 654,319 650.5,323 C648.5,326 650,329 652,328.5" fill="none" stroke="#8a8a8a" stroke-width="2.6" stroke-linecap="round"/><circle cx="651.5" cy="328.5" r="2.2" fill="#8a8a8a" stroke="#333" stroke-width="0.9"/><path d="M690,329 C680,336 670,346 661,356" fill="none" stroke="#333" stroke-width="3.6" stroke-linecap="round"/><path d="M690,329 C680,336 670,346 661,356" fill="none" stroke="#8a8a8a" stroke-width="2.2" stroke-linecap="round"/><path d="M649,296 C654,298 658,302 661,306 C661,300 663,296 668,294 C667,300 666,306 663,310 C658,311 652,308 649,303 C648,300 648,298 649,296 Z" fill="#9a9a9a" stroke="#333" stroke-width="0.9" stroke-linejoin="round"/><path d="M670.5,347.5 L673,353 L679,353 L674.5,357 L676.5,363 L670.5,359.5 L664.5,363 L666.5,357 L662,353 L668,353 Z" fill="#7a7a7a" stroke="#333" stroke-width="0.9"/><circle cx="670.5" cy="356" r="1.3" fill="#c8c8c8"/><path d="M681,338 L681,374" fill="none" stroke="#333" stroke-width="3.2" stroke-linecap="round"/><path d="M681,338 L681,374" fill="none" stroke="#8a8a8a" stroke-width="1.8" stroke-linecap="round"/><path d="M676,340 C678,352 678,362 680,374" fill="none" stroke="#333" stroke-width="3.0" stroke-linecap="round"/><path d="M676,340 C678,352 678,362 680,374" fill="none" stroke="#8a8a8a" stroke-width="1.6" stroke-linecap="round"/><path d="M672,338 C676,336 680,338 681,342 C678,344 674,343 672,338 Z" fill="#9a9a9a" stroke="#333" stroke-width="0.8" stroke-linejoin="round"/><path d="M649,337 C654,341 659,350 660,360 C661,367 659,373 656,377 C652,370 649,360 648.5,350 C648.2,345 648.5,340 649,337 Z" fill="url(#gLf)" stroke="#333" stroke-width="0.9" stroke-linejoin="round"/><path d="M669,379 C661,384 656,392 655,402 C654,410 655,416 656,420 C659,410 664,398 670,388 Z" fill="#a2a2a2" stroke="#333" stroke-width="0.9" stroke-linejoin="round"/><path d="M675,396 C668,402 664,412 664,422 C664,430 666,436 668,440 C669,428 672,414 676,404 Z" fill="#a2a2a2" stroke="#333" stroke-width="0.9" stroke-linejoin="round"/><path d="M669,442 C664,436 656,434 651,436 C648,438 649,441 651,440.5" fill="none" stroke="#333" stroke-width="4.0" stroke-linecap="round"/><path d="M669,442 C664,436 656,434 651,436 C648,438 649,441 651,440.5" fill="none" stroke="#8a8a8a" stroke-width="2.6" stroke-linecap="round"/><circle cx="650.5" cy="440" r="2.3" fill="#8a8a8a" stroke="#333" stroke-width="0.9"/><path d="M659.5,447 C666,448 672,452 676,458 C680,465 681,472 680,478 C676,472 671,464 666,458 C663,454 660,451 659.5,447 Z" fill="#9a9a9a" stroke="#333" stroke-width="0.9" stroke-linejoin="round"/><path d="M648,488 C652,484 656,478 659,474 C662,470 667,470 669,474 C671,477 675,478 678,480 L677,486 C672,484 667,482 664,482 C660,484 654,488 648,490 Z" fill="#8c8c8c" stroke="#333" stroke-width="0.9" stroke-linejoin="round"/></g><use href="#lh" transform="translate(1365.0,0) scale(-1,1)"/><path d="M683,138 C679,143 675,149 675,157 C675,167 679,176 683,190 C687,176 691,167 691,157 C691,149 687,143 683,138 Z" fill="url(#gCol)" stroke="#333" stroke-width="1.0" stroke-linejoin="round"/><path d="M683,146 L683,186" fill="none" stroke="#3a3a3a" stroke-width="1.6" stroke-linecap="round"/><ellipse cx="683" cy="189" rx="7" ry="4" fill="#3a3a3a"/><circle cx="683" cy="208" r="10.5" fill="#dcdcdc" stroke="#333" stroke-width="1"/><circle cx="683" cy="207.5" r="7.5" fill="url(#gB)" stroke="#333" stroke-width="0.9"/><path d="M683,222 C679,230 679,240 683,249 C687,240 687,230 683,222 Z" fill="url(#gCol)" stroke="#333" stroke-width="1.0" stroke-linejoin="round"/><circle cx="683" cy="584" r="10.5" fill="#dcdcdc" stroke="#333" stroke-width="1"/><circle cx="683" cy="584" r="7.5" fill="url(#gB)" stroke="#333" stroke-width="0.9"/><path d="M683,598 C678,612 675,626 675,638 C675,646 679,651 683,656 C687,651 691,646 691,638 C691,626 688,612 683,598 Z" fill="url(#gCol)" stroke="#333" stroke-width="1.0" stroke-linejoin="round"/><path d="M683,604 L683,648" fill="none" stroke="#3a3a3a" stroke-width="1.6" stroke-linecap="round"/><path d="M671,375 C675,373 691,373 695,375 C694,384 690,392 688,399 L678,399 C676,392 672,384 671,375 Z" fill="url(#gCol)" stroke="#333" stroke-width="1.0" stroke-linejoin="round"/><path d="M678.5,399 L687.5,399 C688.5,404 688.5,410 687.5,415 C689,425 689,440 687.5,452 C686.5,460 686,466 685.5,472 L680.5,472 C680,466 679.5,460 678.5,452 C677,440 677,425 678.5,415 C677.5,410 677.5,404 678.5,399 Z" fill="url(#gCol)" stroke="#333" stroke-width="1.0" stroke-linejoin="round"/><path d="M677,471 C674,478 674,486 677,492 C679,496 680,500 683,503 C686,500 687,496 689,492 C692,486 692,478 689,471 Z" fill="#7e7e7e" stroke="#333" stroke-width="0.9"/></svg>
<div class="a" style="left:277px;top:706px;width:811px;height:1px;background:#a0a0a0"></div>
<div class="a" style="left:298px;top:723px;width:25px;height:20px;background:#000;box-shadow:1px 1px 0 #aaa"></div>
<div class="a" style="left:283px;top:711px;width:25px;height:20px;background:#fff;border:1px solid #000;box-shadow:inset 0 0 0 0.6px #444,1px 1px 0 #aaa"></div>
<div class="sw" style="left:333px;background:#ffffff"></div>
<div class="sw" style="left:368px;background:#000000"></div>
<div class="sw" style="left:403px;background:#00ffff"></div>
<div class="sw" style="left:438px;background:#3041d8"></div>
<div class="sw" style="left:473px;background:#4db34d"></div>
<div class="sw" style="left:508px;background:#dd1020"></div>
<div class="sw" style="left:543px;background:#a030e0"></div>
<div class="sw" style="left:578px;background:#ffff80"></div>
<div class="sw" style="left:613px;background:#b0a038"></div>
<div class="sw" style="left:648px;background:#ffc810"></div>
<div class="sw" style="left:683px;background:#080808"></div>
<div class="sw" style="left:718px;background:#080808"></div>
<div class="sw" style="left:753px;background:#080808"></div>
<div class="sw" style="left:788px;background:#080808"></div>
<div class="sw" style="left:823px;background:#080808"></div>
<div class="sw" style="left:858px;background:#080808"></div>
<div class="sw" style="left:893px;background:#080808"></div>
<div class="sw" style="left:928px;background:#080808"></div>
<div class="sw" style="left:963px;background:#080808"></div>
<div class="sw" style="left:998px;background:#080808"></div>
<div class="sw" style="left:1033px;background:#080808"></div>
<div class="a" style="left:1093px;top:42px;width:1px;height:705px;background:#a0a0a0"></div>
<div class="bar" style="top:45px"><div class="bart">Vectors</div><div class="ddb"></div></div>
<div class="bar" style="top:76px"><div class="bart">Bitmaps</div><div class="ddb"></div></div>
<div class="bar" style="top:107px"><div class="bart">Reliefs</div><div class="ddb"></div></div>
<div class="a" style="left:0;top:747px;width:1366px;height:21px;background:#f0f0f0;border-top:1px solid #ddd"></div>
<div class="a" style="left:1023px;top:751px;width:66px;height:17px;border-left:1px solid #a0a0a0;border-top:1px solid #a0a0a0"></div>
<div class="t" style="left:1026px;top:754px;font-size:12px;color:#222;letter-spacing:-0.5px">X: 1120.900</div>
<div class="a" style="left:1092px;top:751px;width:66px;height:17px;border-left:1px solid #a0a0a0;border-top:1px solid #a0a0a0"></div>
<div class="t" style="left:1095px;top:754px;font-size:12px;color:#222;letter-spacing:-0.5px">Y: -572.449</div>
<div class="a" style="left:1161px;top:751px;width:60px;height:17px;border-left:1px solid #a0a0a0;border-top:1px solid #a0a0a0"></div>
<div class="a" style="left:1224px;top:751px;width:70px;height:17px;border-left:1px solid #a0a0a0;border-top:1px solid #a0a0a0"></div>
<div class="a" style="left:1297px;top:751px;width:69px;height:17px;border-left:1px solid #a0a0a0;border-top:1px solid #a0a0a0"></div>
<div class="a" style="left:1145px;top:0;width:33px;height:2px;background:#6a6a6a"></div>
<svg class="a" style="left:0;top:0" width="1366" height="45"><path d="M1245,10.5 h10" stroke="#111" stroke-width="1"/><rect x="1290.5" y="7.5" width="8" height="8" fill="#fff" stroke="#111" stroke-width="1"/><path d="M1292.5,7.5 v-2 h8 v8 h-2" fill="none" stroke="#111" stroke-width="1"/><path d="M1336,5 L1346,15 M1346,5 L1336,15" stroke="#111" stroke-width="1.1"/><rect x="1309.5" y="24.5" width="17" height="17" fill="#fff" stroke="#e4e4e4"/><rect x="1328.5" y="24.5" width="17" height="17" fill="#fff" stroke="#e4e4e4"/><rect x="1347.5" y="24.5" width="17" height="17" fill="#fff" stroke="#e4e4e4"/><rect x="1314" y="35" width="6" height="2" fill="#777"/><rect x="1333.5" y="31.5" width="7" height="5" fill="none" stroke="#777" stroke-width="1.3"/><path d="M1335.5,29.5 h7 v5" fill="none" stroke="#777" stroke-width="1.3"/><path d="M1353,30 L1359,36 M1359,30 L1353,36" stroke="#777" stroke-width="1.8"/></svg>
<svg class="a" style="left:0;top:0" width="1366" height="768"><defs><linearGradient id="iBlue" x1="0" y1="0" x2="0" y2="1"><stop offset="0" stop-color="#9fd0e8"/><stop offset="1" stop-color="#2e62b0"/></linearGradient><linearGradient id="iDoc" x1="0" y1="0" x2="1" y2="1"><stop offset="0" stop-color="#e8eef6"/><stop offset="1" stop-color="#6f86a8"/></linearGradient><linearGradient id="iYel" x1="0" y1="0" x2="0" y2="1"><stop offset="0" stop-color="#fff36a"/><stop offset="1" stop-color="#d8b800"/></linearGradient><radialGradient id="iLens" cx="0.4" cy="0.4" r="0.6"><stop offset="0" stop-color="#f2fbff"/><stop offset="1" stop-color="#a9d4ea"/></radialGradient><linearGradient id="iGrn" x1="0" y1="0" x2="0" y2="1"><stop offset="0" stop-color="#9fe09f"/><stop offset="1" stop-color="#4c9c4c"/></linearGradient><linearGradient id="iPurp" x1="0" y1="0" x2="0" y2="1"><stop offset="0" stop-color="#c8c8f8"/><stop offset="0.5" stop-color="#6a6ad8"/><stop offset="1" stop-color="#4040a0"/></linearGradient><linearGradient id="iAbc" x1="0" y1="0" x2="0" y2="1"><stop offset="0" stop-color="#8ccc8c"/><stop offset="0.45" stop-color="#5e9e5e"/><stop offset="0.55" stop-color="#3a6a3a"/><stop offset="1" stop-color="#8cc08c"/></linearGradient></defs><g transform="translate(2,3)"><rect x="0.6" y="0" width="8" height="15" rx="1.5" fill="url(#iBlue)"/><rect x="-1" y="11" width="9" height="4" fill="#3b6fb8"/><path d="M7,16 L12,0.5 L13.5,0.5 L15.5,16 L13.5,16 L12.8,11 L10.5,11 L9,16 Z M10.8,9 L12.6,9 L12.3,4 Z" fill="#8a1a9a"/></g><g transform="translate(7,24)"><rect x="0.6" y="0" width="8" height="15" rx="1.5" fill="url(#iBlue)"/><rect x="-1" y="11" width="9" height="4" fill="#3b6fb8"/><path d="M7,16 L12,0.5 L13.5,0.5 L15.5,16 L13.5,16 L12.8,11 L10.5,11 L9,16 Z M10.8,9 L12.6,9 L12.3,4 Z" fill="#8a1a9a"/></g><path d="M34,176 L44,176 L40,184 L30,184 Z" fill="#c8c8c8" opacity="0.8"/><path d="M23,162 L32,162 L37,168 L37,183 L23,183 Z" fill="url(#iDoc)" stroke="#8ea0b8" stroke-width="0.6"/><path d="M32,162 L32,168 L37,168 Z" fill="#fff"/><path d="M62,181 L88,178 L84,184 L60,185 Z" fill="#bdbdbd" opacity="0.8"/><path d="M60,168 L62,164 L70,164 L72,166 L84,166 L85,172 L60,180 Z" fill="#f0dc20"/><path d="M61,172 L87,170 L84,183 L60,184 Z" fill="url(#iYel)"/><path d="M118,176 L131,176 L126,184 L115,184 Z" fill="#c4c4c4" opacity="0.8"/><rect x="104" y="164" width="21" height="20" fill="#2a5cc0"/><rect x="107" y="164" width="15" height="9" fill="#d8d8d8"/><rect x="108" y="176" width="13" height="8" fill="#b8b8b8"/><rect x="110" y="178" width="3" height="5" fill="#2a5cc0"/><ellipse cx="155" cy="184" rx="9" ry="2.5" fill="#c8d8f0" stroke="#7a8ab0" stroke-width="0.6"/><path d="M146,162 L160,160 L162,180 L148,183 Z" fill="#3e8ad8" stroke="#5070a0" stroke-width="0.6"/><path d="M148,164 L159,162.5 L160.5,178 L149.5,180 Z" fill="#bfe0f8"/><path d="M150,171 L153,175 L158,165" fill="none" stroke="#303090" stroke-width="1.6"/><circle cx="165" cy="178" r="6.5" fill="none" stroke="#d89010" stroke-width="2.6" stroke-dasharray="2.2,1.8"/><circle cx="165" cy="178" r="5" fill="#e8a018" stroke="#805010" stroke-width="0.8"/><circle cx="165" cy="178" r="2" fill="#f0f0f0"/><path d="M24,210 C26,202 38,200 42,208 C44,213 40,217 38,217" fill="none" stroke="#8c8c8c" stroke-width="3"/><path d="M21,204 L29,212 L21,214 Z" fill="#8c8c8c"/><path d="M83,210 C81,202 69,200 65,208 C63,213 67,217 69,217" fill="none" stroke="#8c8c8c" stroke-width="3"/><path d="M86,204 L78,212 L86,214 Z" fill="#8c8c8c"/><path d="M109,200 L120,216 M122,200 L111,216" stroke="#b4b4b4" stroke-width="1.4"/><circle cx="109" cy="218" r="2.6" fill="none" stroke="#b4b4b4" stroke-width="1.2"/><circle cx="122" cy="218" r="2.6" fill="none" stroke="#b4b4b4" stroke-width="1.2"/><rect x="146" y="199" width="11" height="15" fill="#d4d4d4" stroke="#c4c4c4" stroke-width="0.6"/><rect x="151" y="204" width="12" height="16" fill="#cfcfcf" stroke="#c0c0c0" stroke-width="0.6"/><rect x="190" y="198" width="17" height="23" fill="#c83020" stroke="#802010" stroke-width="0.6"/><rect x="195" y="196" width="7" height="4" rx="1" fill="#b0b0b0"/><rect x="197" y="207" width="13" height="15" fill="#d8b080" stroke="#a07040" stroke-width="0.6"/><path d="M17,262 L41,259 L45,285 L20,288 Z" fill="#f8f8f8" stroke="#a8a8a8" stroke-width="1"/><path d="M15,265 L39,262 L43,287 L18,290 Z" fill="#fff" stroke="#b0b0b0" stroke-width="1"/><ellipse cx="29" cy="281" rx="8" ry="6" fill="#b84838"/><circle cx="29" cy="271" r="5" fill="#d07060"/><circle cx="25" cy="266.5" r="1.8" fill="#b84838"/><circle cx="33" cy="266.5" r="1.8" fill="#b84838"/><path d="M49,271.5 L53.5,274.7 L49,277.9 Z" fill="#000"/><rect x="62" y="262" width="22" height="23.5" fill="#000"/><ellipse cx="72" cy="279" rx="7" ry="5" fill="#a8a8a8"/><circle cx="72" cy="270" r="5" fill="#c8c8c8"/><circle cx="67.5" cy="265.5" r="1.8" fill="#ddd"/><circle cx="76.5" cy="265.5" r="1.8" fill="#ddd"/><path d="M79,267 L83,267 M81,267 L81,272" stroke="#fff" stroke-width="1.2"/><ellipse cx="113" cy="280" rx="11" ry="3" fill="#d84040" opacity="0.6"/><ellipse cx="114" cy="279" rx="6" ry="2.4" fill="#d01818"/><path d="M114,278 L108,270 L114,262" fill="none" stroke="#b01010" stroke-width="2"/><path d="M111,263 L122,260 L123,266 L115,270 Z" fill="#e01818"/><rect x="142" y="259" width="22" height="25" fill="#4a4628"/><rect x="142" y="259" width="22" height="8" fill="#8c9468"/><ellipse cx="153" cy="267" rx="6.5" ry="8" fill="#1e1408"/><ellipse cx="153" cy="267.5" rx="3.6" ry="4.8" fill="#d8b070"/><path d="M144,284 C145,276 150,273 153,273 C157,273 162,277 163,284 Z" fill="#2a1c0c"/><path d="M150,275 L156,275 L155,280 L151,280 Z" fill="#c09858"/><path d="M152,282 L165,273 L172,277.5 L159,288 Z" fill="#e88a20" stroke="#a05010" stroke-width="0.7"/><path d="M152,282 L159,288 L159,285.5 L153.5,281 Z" fill="#b06010"/><rect x="13" y="345.5" width="191" height="1" fill="#9a9a9a"/><rect x="13" y="346.5" width="191" height="1" fill="#fff"/><rect x="20.5" y="340.5" width="9" height="14" fill="#f4f4f4" stroke="#222" stroke-width="1"/><path d="M224,337.5 L226,339.5 L224,341.5 L222,339.5 Z" fill="#445566"/><path d="M26,384 L38,370 L41,373 L29,386 Z" fill="#d82828"/><path d="M27,386 L42,380" stroke="#bbb" stroke-width="2"/><path d="M48.5,375.5 L53.0,378.7 L48.5,381.9 Z" fill="#000"/><path d="M67,376 L81,372 L84,386 L72,389 Z" fill="#8aa8a0"/><path d="M64,378 C64,370 72,368 80,372 L72,382 Z" fill="#d82020"/><path d="M91,375.5 L95.5,378.7 L91,381.9 Z" fill="#000"/><circle cx="120" cy="371" r="3.5" fill="#901828"/><path d="M118,374 L108,385" stroke="#4040a0" stroke-width="2.4"/><path d="M112,385 L126,382" stroke="#bbb" stroke-width="1.6"/><path d="M143,378 C143,368 160,366 168,374 C170,380 164,386 154,386 C147,386 143,383 143,378 Z" fill="#7a5038"/><circle cx="149" cy="381" r="1.5" fill="#f0c020"/><circle cx="154" cy="382" r="1.5" fill="#e03030"/><circle cx="159" cy="381.5" r="1.5" fill="#30a030"/><circle cx="164" cy="379" r="1.5" fill="#3040d0"/><circle cx="152" cy="373" r="2" fill="#e0d0c0"/><path d="M174,375.5 L178.5,378.7 L174,381.9 Z" fill="#000"/><path d="M186,378 C186,370 194,368 200,370 C206,372 206,380 202,386 C196,390 186,386 186,378 Z" fill="#f8e818"/><path d="M199,370 C206,366 212,374 211,386 L203,387" fill="none" stroke="#2a3a80" stroke-width="1.2"/><rect x="13" y="424" width="41" height="35" fill="#fafafa"/><path d="M13.5,459 L13.5,424.5 L54,424.5" fill="none" stroke="#a0a0a0" stroke-width="1"/><ellipse cx="28" cy="449" rx="6.0" ry="2" fill="#c4c4c4"/><path d="M21,433 L34,437 L30,440 L37,447 L35,449 L28,442 L25,446 Z" fill="#5c5c5c"/><rect x="56" y="424" width="34" height="35" fill="#e2e2e2"/><rect x="90.5" y="424" width="4" height="36" fill="#dcdcdc"/><path d="M90.0,425 L95.0,425 L95.0,426 L94.0,426 L94.0,429 L95.0,430 L93.0,430 L93.0,433 L92.0,433 L92.0,430 L90.0,430 L91.0,429 L91.0,426 L90.0,426 Z" fill="#000"/><rect x="61" y="430" width="3" height="6" fill="#000"/><rect x="61.8" y="427" width="1.6" height="30" fill="#000"/><ellipse cx="75" cy="452" rx="5.0" ry="2" fill="#c4c4c4"/><path d="M70,434 L82,446 L76,446 L70,452 Z" fill="#000"/><path d="M114.5,433.5 L123.5,442.3 L114.5,451.2 L105.5,442.3 Z" fill="#3c3c3c"/><rect x="110" y="438" width="3" height="3" fill="#f0f0f0"/><rect x="116" y="438" width="3" height="3" fill="#f0f0f0"/><rect x="110" y="444" width="3" height="3" fill="#f0f0f0"/><rect x="116" y="444" width="3" height="3" fill="#f0f0f0"/><path d="M119,430.5 C124,432 127,437 127.3,442" fill="none" stroke="#3c3c3c" stroke-width="2.4"/><path d="M116,429 L121,426 L120.5,433 Z" fill="#3c3c3c"/><path d="M101,441 C101,447 104,451 109,453" fill="none" stroke="#3c3c3c" stroke-width="2.4"/><path d="M112,453.5 L107,456.5 L107.5,449.5 Z" fill="#3c3c3c"/><path d="M101,431 h8 M101,434 h8" stroke="#3c3c3c" stroke-width="1.3"/><path d="M109,431 l-2.5,-2 v4 Z M101,434 l2.5,-2 v4 Z" fill="#3c3c3c"/><path d="M122,448 v8 M125,448 v8" stroke="#3c3c3c" stroke-width="1.3"/><path d="M122,448 l-2,2.5 h4 Z M125,456 l-2,-2.5 h4 Z" fill="#3c3c3c"/><rect x="140" y="424" width="40" height="35" fill="#e2e2e2"/><rect x="147" y="433" width="20" height="20" fill="none" stroke="#333" stroke-width="1.8"/><rect x="182" y="424" width="39" height="35" fill="#e2e2e2"/><circle cx="199" cy="442" r="9.5" fill="none" stroke="#333" stroke-width="1.8"/><rect x="14" y="461" width="40" height="35" fill="#e2e2e2"/><rect x="56" y="461" width="40" height="35" fill="#e2e2e2"/><rect x="98" y="461" width="40" height="35" fill="#e2e2e2"/><rect x="140" y="461" width="40" height="35" fill="#e2e2e2"/><rect x="182" y="461" width="34" height="35" fill="#e2e2e2"/><rect x="217" y="461" width="4" height="36" fill="#dcdcdc"/><path d="M216.5,462 L221.5,462 L221.5,463 L220.5,463 L220.5,466 L221.5,467 L219.5,467 L219.5,470 L218.5,470 L218.5,467 L216.5,467 L217.5,466 L217.5,463 L216.5,463 Z" fill="#000"/><path d="M21,470 L21,484 L30,491 L35,480 L40,470 L32,474 L26,469 Z" fill="none" stroke="#333" stroke-width="1.6"/><ellipse cx="72" cy="479" rx="9.5" ry="7" fill="none" stroke="#333" stroke-width="1.6"/><path d="M114,468 L125,476 L121,489 L107,489 L103,476 Z" fill="none" stroke="#333" stroke-width="1.6"/><path d="M157,470 L160,477 L167,477 L162,482 L164,490 L157,485 L150,490 L152,482 L146,477 L154,477 Z" fill="none" stroke="#333" stroke-width="1.4"/><path d="M190,472 C198,468 206,474 205,486" fill="none" stroke="#333" stroke-width="1.6"/><ellipse cx="32" cy="520" rx="12" ry="2" fill="#c8c8c8"/><path d="M21,502 L43,502 L43,508 L35,508 L35,522 L37.5,522 L37.5,526 L26.5,526 L26.5,522 L29,522 L29,508 L21,508 Z" fill="#e89a28" stroke="#6a4a10" stroke-width="0.8"/><path d="M22,503 h20 M30,509 v12" stroke="#f8c868" stroke-width="1.2"/><circle cx="21" cy="502" r="1.4" fill="#282870"/><circle cx="43" cy="502" r="1.4" fill="#282870"/><circle cx="21" cy="508" r="1.4" fill="#282870"/><circle cx="43" cy="508" r="1.4" fill="#282870"/><circle cx="26.5" cy="526" r="1.4" fill="#282870"/><circle cx="37.5" cy="526" r="1.4" fill="#282870"/><circle cx="29" cy="508" r="1.4" fill="#282870"/><circle cx="35" cy="508" r="1.4" fill="#282870"/><rect x="56" y="497" width="40" height="33" fill="#e2e2e2"/><rect x="98" y="497" width="34" height="33" fill="#e2e2e2"/><rect x="132.5" y="497" width="4" height="36" fill="#dcdcdc"/><path d="M132.0,498 L137.0,498 L137.0,499 L136.0,499 L136.0,502 L137.0,503 L135.0,503 L135.0,506 L134.0,506 L134.0,503 L132.0,503 L133.0,502 L133.0,499 L132.0,499 Z" fill="#000"/><path d="M58,513 L65,506 L71,513 L65,520 Z M72,510 C75,505 80,508 80,513" fill="none" stroke="#b8b8b8" stroke-width="1.2"/><path d="M102,513 L108,506 L116,513 L112,520 Z M115,510 C120,506 126,512 124,518" fill="none" stroke="#b8b8b8" stroke-width="1.2"/><path d="M143,508 C146,502 156,502 158,508 L158,520 L144,520 Z" fill="#f0c020" stroke="#8a6a10" stroke-width="0.6"/><path d="M147,506 C149,504 154,505 155,509 L155,515 L147,515 Z" fill="#2a3a80"/><path d="M156,516 L172,521 L170,527 L156,520 Z" fill="#f0e080"/><rect x="185.5" y="501.5" width="25" height="25" fill="#0a7a0a" stroke="#5ad05a" stroke-width="1"/><path d="M195,506 h6 v5.5 h5.5 v6 h-5.5 v5.5 h-6 v-5.5 h-5.5 v-6 h5.5 Z" fill="none" stroke="#b8f0b8" stroke-width="1.2"/><rect x="17" y="536" width="29" height="28.5" fill="url(#iAbc)"/><path d="M18,537 h28 M18,537 v27.5" stroke="#0a1a0a" stroke-width="2"/><path d="M17,554.7 h29 M42.2,537 v27.5" stroke="#2a4a2a" stroke-width="1.2"/><circle cx="22.4" cy="541.5" r="2.5" fill="#1a3a1a"/><rect x="28" y="539" width="2.2" height="5" fill="#1a3a1a"/><path d="M32.3,543.8 L36.6,539.4 L41,543.8 Z" fill="#1a3a1a"/><text x="19.5" y="552.3" font-family="Liberation Sans" font-size="9.5" fill="#0f3a12" textLength="19.5" lengthAdjust="spacingAndGlyphs">ABC</text><circle cx="22.4" cy="559" r="2.5" fill="#2a4a2a"/><rect x="28" y="557" width="2.2" height="5" fill="#2a4a2a"/><path d="M32.3,561.5 L36.6,557 L41,561.5 Z" fill="#2a4a2a"/><path d="M60,538 C67,540 80,540 87,538 C85,546 85,555 87,563 C80,561 67,561 60,563 C62,555 62,546 60,538 Z" fill="none" stroke="#8c8c8c" stroke-width="1.2"/><path d="M62,546 h24 M62,554 h24 M67,539 v23 M74,539 v23 M81,539 v23" stroke="#a8a8a8" stroke-width="0.8"/><circle cx="73" cy="550" r="6" fill="none" stroke="#a0a0a0" stroke-width="1.2"/><rect x="100.4" y="553.4" width="5.2" height="5.2" fill="none" stroke="#9a9a9a" stroke-width="1.3"/><rect x="106.9" y="553.4" width="5.2" height="5.2" fill="none" stroke="#9a9a9a" stroke-width="1.3"/><rect x="106.9" y="559.9" width="5.2" height="5.2" fill="none" stroke="#9a9a9a" stroke-width="1.3"/><rect x="112.6" y="538.6" width="4.8" height="4.8" rx="1.5" fill="none" stroke="#9a9a9a" stroke-width="1.3"/><rect x="124.6" y="538.6" width="4.8" height="4.8" rx="1.5" fill="none" stroke="#9a9a9a" stroke-width="1.3"/><rect x="115.6" y="545.6" width="4.8" height="4.8" rx="1.5" fill="none" stroke="#9a9a9a" stroke-width="1.3"/><rect x="124.6" y="545.6" width="4.8" height="4.8" rx="1.5" fill="none" stroke="#9a9a9a" stroke-width="1.3"/><rect x="118.6" y="550.6" width="4.8" height="4.8" rx="1.5" fill="none" stroke="#9a9a9a" stroke-width="1.3"/><rect x="146" y="538" width="3" height="3" fill="none" stroke="#000" stroke-width="1"/><path d="M147,557 L153,550 L158,555 L162,552 L166,557 L170,553" fill="none" stroke="#111" stroke-width="1.4"/><circle cx="147" cy="557" r="2.2" fill="#f8f8b0" stroke="#333" stroke-width="0.6"/><circle cx="153" cy="550" r="2.2" fill="#f8f8b0" stroke="#333" stroke-width="0.6"/><circle cx="158" cy="555" r="2.2" fill="#f8f8b0" stroke="#333" stroke-width="0.6"/><circle cx="162" cy="552" r="2.2" fill="#f8f8b0" stroke="#333" stroke-width="0.6"/><circle cx="166" cy="557" r="2.2" fill="#f8f8b0" stroke="#333" stroke-width="0.6"/><path d="M186,547 L194,540 L198,546 L206,539 M188,555 C194,550 202,558 210,553" fill="none" stroke="#c4c4c4" stroke-width="1.2"/><path d="M22,572 C14,580 14,594 22,600" fill="none" stroke="#a8a8a8" stroke-width="1.8"/><path d="M22,572 L31,578 M22,600 L31,594 M30,586 L40,586" stroke="#aaa" stroke-width="1"/><rect x="28.5" y="574.5" width="3" height="3" fill="#aaa"/><rect x="29.5" y="594.5" width="3" height="3" fill="#aaa"/><rect x="40.5" y="584.5" width="3" height="3" fill="#aaa"/><rect x="35.5" y="570.5" width="3" height="3" fill="#aaa"/><rect x="34.5" y="598.5" width="3" height="3" fill="#aaa"/><path d="M58,572 L87,586 L58,600" fill="none" stroke="#777" stroke-width="2"/><path d="M58,572 L65,575 M58,600 L65,597" stroke="#111" stroke-width="2.4"/><path d="M66,576 L76,581 M66,596 L76,591" stroke="#f0f0a0" stroke-width="2"/><path d="M100,589 L110,600 M100,600 L104,596 M118,571 L130,582 M121,577 L126,572" stroke="#000" stroke-width="2.8"/><path d="M104,594 L123,576" stroke="#f4f4b0" stroke-width="3"/><circle cx="121" cy="590" r="2.8" fill="none" stroke="#000" stroke-width="1.6"/><circle cx="125" cy="585" r="2.8" fill="none" stroke="#000" stroke-width="1.6"/><path d="M112,582 L121,589 M110,585 L119,588" stroke="#333" stroke-width="1"/><ellipse cx="157" cy="596" rx="13" ry="4" fill="#b8b8b8"/><path d="M144,580 L170,580 L168,596 C160,600 152,600 146,596 Z" fill="url(#iPurp)"/><ellipse cx="157" cy="580" rx="13" ry="3.2" fill="#a8a8e0" stroke="#666" stroke-width="1"/><path d="M185,597 C190,590 196,580 202,576 M196,584 L204,592 M202,576 L212,575" fill="none" stroke="#cacaca" stroke-width="1.4"/><path d="M31,610 L31,636 M24,613 C18,618 22,625 20,630 L31,630" fill="none" stroke="#a0a0a0" stroke-width="1.2" stroke-dasharray="0"/><path d="M34,618 C40,620 40,628 34,630" fill="none" stroke="#d0d0d0" stroke-width="1"/><path d="M59,621 C60,613 66,610 72,612 L87,624 L84,636 L60,636 Z" fill="url(#iYel)"/><path d="M75,607 L78,615 L87,616 L80,621 L83,629 L75,624 L68,629 L70,621 L63,616 L72,615 Z" fill="#f8f020" stroke="#333" stroke-width="1.2"/><rect x="15" y="669" width="39" height="33" fill="#e2e2e2"/><rect x="15" y="704" width="39" height="18" fill="#e2e2e2"/><rect x="56" y="669" width="39" height="33" fill="#e2e2e2"/><rect x="56" y="704" width="39" height="18" fill="#e2e2e2"/><rect x="98" y="669" width="39" height="33" fill="#e2e2e2"/><rect x="98" y="704" width="39" height="18" fill="#e2e2e2"/><rect x="140" y="669" width="39" height="33" fill="#e2e2e2"/><rect x="140" y="704" width="39" height="18" fill="#e2e2e2"/><rect x="182" y="669" width="39" height="33" fill="#e2e2e2"/><rect x="182" y="704" width="39" height="18" fill="#e2e2e2"/><path d="M17,673 v24" stroke="#6a6a6a" stroke-width="1" stroke-dasharray="3,1"/><rect x="28" y="680" width="11" height="11" fill="none" stroke="#6a6a6a" stroke-width="1.5"/><path d="M19,685 h8 M19,685 l3,-2 M19,685 l3,2" stroke="#6a6a6a" stroke-width="1.6"/><path d="M84,673 v24" stroke="#6a6a6a" stroke-width="1" stroke-dasharray="3,1"/><rect x="60" y="680" width="11" height="11" fill="none" stroke="#6a6a6a" stroke-width="1.5"/><path d="M73,685 h8 M81,685 l-3,-2 M81,685 l-3,2" stroke="#6a6a6a" stroke-width="1.6"/><path d="M101,674 h26" stroke="#6a6a6a" stroke-width="1" stroke-dasharray="3,1"/><rect x="109" y="685" width="11" height="11" fill="none" stroke="#6a6a6a" stroke-width="1.5"/><path d="M114.5,676 v8" stroke="#6a6a6a" stroke-width="1.8"/><path d="M141,698 h26" stroke="#6a6a6a" stroke-width="1" stroke-dasharray="3,1"/><rect x="149" y="675" width="11" height="11" fill="none" stroke="#6a6a6a" stroke-width="1.5"/><path d="M154.5,688 v8" stroke="#6a6a6a" stroke-width="1.8"/><path d="M184,673 v24 M210,673 v24" stroke="#6a6a6a" stroke-width="1" stroke-dasharray="3,1"/><rect x="192" y="680" width="11" height="11" fill="none" stroke="#6a6a6a" stroke-width="1.5"/><path d="M186,685 h5 M204,685 h5" stroke="#6a6a6a" stroke-width="1.6"/><path d="M16,709 h26" stroke="#6a6a6a" stroke-width="1"/><rect x="22" y="716" width="11" height="8" fill="none" stroke="#6a6a6a" stroke-width="1.5"/><rect x="59" y="709" width="26" height="14" fill="none" stroke="#6a6a6a" stroke-width="1" stroke-dasharray="3,1"/><rect x="65" y="716" width="11" height="8" fill="none" stroke="#6a6a6a" stroke-width="1.5"/><rect x="98" y="704" width="34" height="18" fill="#f4f4f4"/><rect x="100" y="709" width="26" height="14" fill="none" stroke="#6a6a6a" stroke-width="1" stroke-dasharray="1,1.5"/><rect x="107" y="716" width="11" height="8" fill="none" stroke="#6a6a6a" stroke-width="1.5"/><rect x="132.5" y="704" width="4" height="36" fill="#dcdcdc"/><path d="M132.0,705 L137.0,705 L137.0,706 L136.0,706 L136.0,709 L137.0,710 L135.0,710 L135.0,713 L134.0,713 L134.0,710 L132.0,710 L133.0,709 L133.0,706 L132.0,706 Z" fill="#000"/><path d="M146,720 C148,714 154,711 160,712 C164,713 168,716 170,720" fill="none" stroke="#000" stroke-width="2" stroke-dasharray="2,2.5"/><rect x="182" y="704" width="39" height="18" fill="#f0f0f0"/><text x="186" y="721" font-family="Liberation Sans" font-weight="bold" font-size="13" fill="#000">Nes</text><circle cx="320" cy="62.5" r="2.6" fill="#c89060"/><circle cx="314" cy="56.5" r="6" fill="url(#iLens)" stroke="#6c8494" stroke-width="1.3"/><path d="M310,56.5 h8 M314,52.5 v8" stroke="#284a60" stroke-width="1.6"/><circle cx="343.5" cy="62.5" r="2.6" fill="#c89060"/><circle cx="337.5" cy="56.5" r="6" fill="url(#iLens)" stroke="#6c8494" stroke-width="1.3"/><path d="M333.5,56.5 h8" stroke="#284a60" stroke-width="1.8"/><circle cx="366.5" cy="62.5" r="2.6" fill="#c89060"/><circle cx="360.5" cy="56.5" r="6" fill="url(#iLens)" stroke="#6c8494" stroke-width="1.3"/><path d="M358,54 C362,52 364,58 360,60" fill="none" stroke="#5a9a20" stroke-width="1.5"/><rect x="377" y="50" width="1" height="18" fill="#a0a0a0"/><circle cx="397.3" cy="62.5" r="2.6" fill="#c89060"/><circle cx="391.3" cy="56.5" r="6" fill="url(#iLens)" stroke="#6c8494" stroke-width="1.3"/><text x="386" y="59.5" font-family="Liberation Sans" font-size="7" fill="#284a60">1:1</text><circle cx="420.2" cy="62.5" r="2.6" fill="#c89060"/><circle cx="414.2" cy="56.5" r="6" fill="url(#iLens)" stroke="#6c8494" stroke-width="1.3"/><rect x="410.5" y="53.5" width="7.5" height="6" fill="none" stroke="#284a60" stroke-width="1.3"/><path d="M432,56 C432,50 442,49 445,53 C447,57 446,60 447,64 L440,65 C435,63 432,60 432,56 Z" fill="#8c8c8c"/><rect x="454" y="50" width="1" height="18" fill="#a0a0a0"/><rect x="459.5" y="48.5" width="21" height="21" fill="#f7f7f7" stroke="#b0b0b0" stroke-width="1"/><rect x="482.5" y="48.5" width="21" height="21" fill="#f7f7f7" stroke="#b0b0b0" stroke-width="1"/><path d="M466,53 h5 M466,56 h5 M466,62 h5 M466,65 h5 M466,53 v12" stroke="#333" stroke-width="1" stroke-dasharray="1.2,0.8"/><path d="M469,59 L473,54.5 L473,57 L478,57 L478,61 L473,61 L473,63.5 Z" fill="#555" stroke="#000" stroke-width="0.8"/><path d="M493,53 h5 M493,56 h5 M493,62 h5 M493,65 h5 M498,53 v12" stroke="#333" stroke-width="1" stroke-dasharray="1.2,0.8"/><path d="M496,59 L492,54.5 L492,57 L487,57 L487,61 L492,61 L492,63.5 Z" fill="#555" stroke="#000" stroke-width="0.8"/><path d="M508,59 L518,53 C522,54 524,58 522,62 L518,64 Z" fill="#8a9ad8"/><circle cx="518" cy="58" r="3" fill="#c8d8f0"/><path d="M521,61 L525,65" stroke="#c09080" stroke-width="1.4"/><rect x="531" y="50" width="1" height="18" fill="#a0a0a0"/><rect x="544" y="58" width="73" height="2" fill="#6e6e6e"/><rect x="544" y="60" width="73" height="1" fill="#fafafa"/><path d="M617,51 L628,51 L628,66 L624,70 L617,70 Z" fill="#f4f4f4"/><path d="M627.5,50 L627.5,65 L623,69.5" fill="none" stroke="#555" stroke-width="1.2"/><path d="M281,84 h14 M287.5,78 v13" stroke="#999" stroke-width="0.8" stroke-dasharray="1.5,1.2"/><path d="M1075,81.5 h3 M1080,81.5 h3" stroke="#111" stroke-width="1"/><path d="M1074.5,84 L1083.5,84 L1079,88.5 Z" fill="#111"/><path d="M1075,107 L1079.5,102.5 L1084,107" fill="none" stroke="#606060" stroke-width="1.6"/><path d="M1075,674.5 L1079.5,679 L1084,674.5" fill="none" stroke="#606060" stroke-width="1.6"/><path d="M309,689.5 L305,693.5 L309,697.5" fill="none" stroke="#606060" stroke-width="1.6"/><path d="M1061,689.5 L1065,693.5 L1061,697.5" fill="none" stroke="#606060" stroke-width="1.6"/><path d="M255,68.5 L260.5,63 L266,68.5" fill="none" stroke="#606060" stroke-width="1.8"/><path d="M254.5,696 L260.5,702 L266.5,696" fill="none" stroke="#606060" stroke-width="1.8"/><path d="M1076,719 L1079.5,715.5 L1083,719" fill="none" stroke="#606060" stroke-width="1.5"/><path d="M1076,737 L1079.5,740.5 L1083,737" fill="none" stroke="#606060" stroke-width="1.5"/><rect x="278" y="685" width="19" height="16" fill="#f0f0f0" stroke="#888" stroke-width="1"/><path d="M283,689 v2 M283,694 v2" stroke="#000" stroke-width="1"/><path d="M286,688 L291,693 L286,698 Z" fill="#000"/><ellipse cx="315" cy="715" rx="4" ry="2.6" fill="none" stroke="#111" stroke-width="1"/><ellipse cx="318" cy="718.5" rx="4" ry="2.6" fill="#fff" stroke="#111" stroke-width="1"/></svg>
<svg class="a" style="left:0;top:0" width="1366" height="768"><defs><filter id="nz" x="0" y="0" width="100%" height="100%"><feTurbulence type="turbulence" baseFrequency="0.09 0.14" numOctaves="3" seed="7"/><feColorMatrix values="0 0 0 0 1  0 0 0 0 1  0 0 0 0 1  1.6 0 0 0 -0.25"/></filter></defs><rect x="0" y="721" width="270" height="26" fill="#d6d6d6"/><rect x="0" y="721" width="270" height="26" filter="url(#nz)" opacity="0.55"/><rect x="1094" y="721" width="272" height="26" fill="#d6d6d6"/><rect x="1094" y="721" width="272" height="26" filter="url(#nz)" opacity="0.55"/><rect x="0" y="721" width="270" height="1" fill="#9c9c9c"/><rect x="1094" y="721" width="272" height="1" fill="#9c9c9c"/></svg>
<div class="a" style="left:0;top:721px;width:62px;height:25px;background:#f2f2f2;border-radius:0 0 5px 0;border-right:1px solid #c8c8c8"></div>
<div class="a" style="left:62px;top:721px;width:66px;height:25px;background:#efefef;border:1px solid #a8a8a8;border-left-color:#c0c0c0;border-bottom:none;border-radius:0 0 6px 0"></div>
<div class="a" style="left:0;top:746px;width:270px;height:1px;background:#a0a0a0"></div>
<div class="t" style="left:9px;top:727px;font-size:12px;color:#111;letter-spacing:-0.35px">Assistant</div>
<div class="t" style="left:71px;top:728px;font-size:12px;color:#111;letter-spacing:-0.05px">Toolpaths</div>
<div class="a" style="left:1094px;top:721px;width:49px;height:25px;background:#f2f2f2;border-radius:0 0 5px 0;border-right:1px solid #c8c8c8"></div>
<div class="a" style="left:1143px;top:721px;width:49px;height:25px;background:#efefef;border:1px solid #a8a8a8;border-left-color:#c0c0c0;border-bottom:none;border-radius:0 0 6px 0"></div>
<div class="a" style="left:1094px;top:746px;width:272px;height:1px;background:#a0a0a0"></div>
<div class="t" style="left:1103px;top:727px;font-size:12px;color:#111;letter-spacing:-0.2px">Layers</div>
<div class="t" style="left:1151px;top:728px;font-size:12px;color:#111">Add In</div>
<div class="a" style="left:1365px;top:42px;width:1px;height:679px;background:#b0b0b0"></div>
<div class="a" style="left:277px;top:702px;width:1px;height:45px;background:#a0a0a0"></div>
<div class="a" style="left:277px;top:746px;width:811px;height:1px;background:#c8c8c8"></div>
</body></html>
